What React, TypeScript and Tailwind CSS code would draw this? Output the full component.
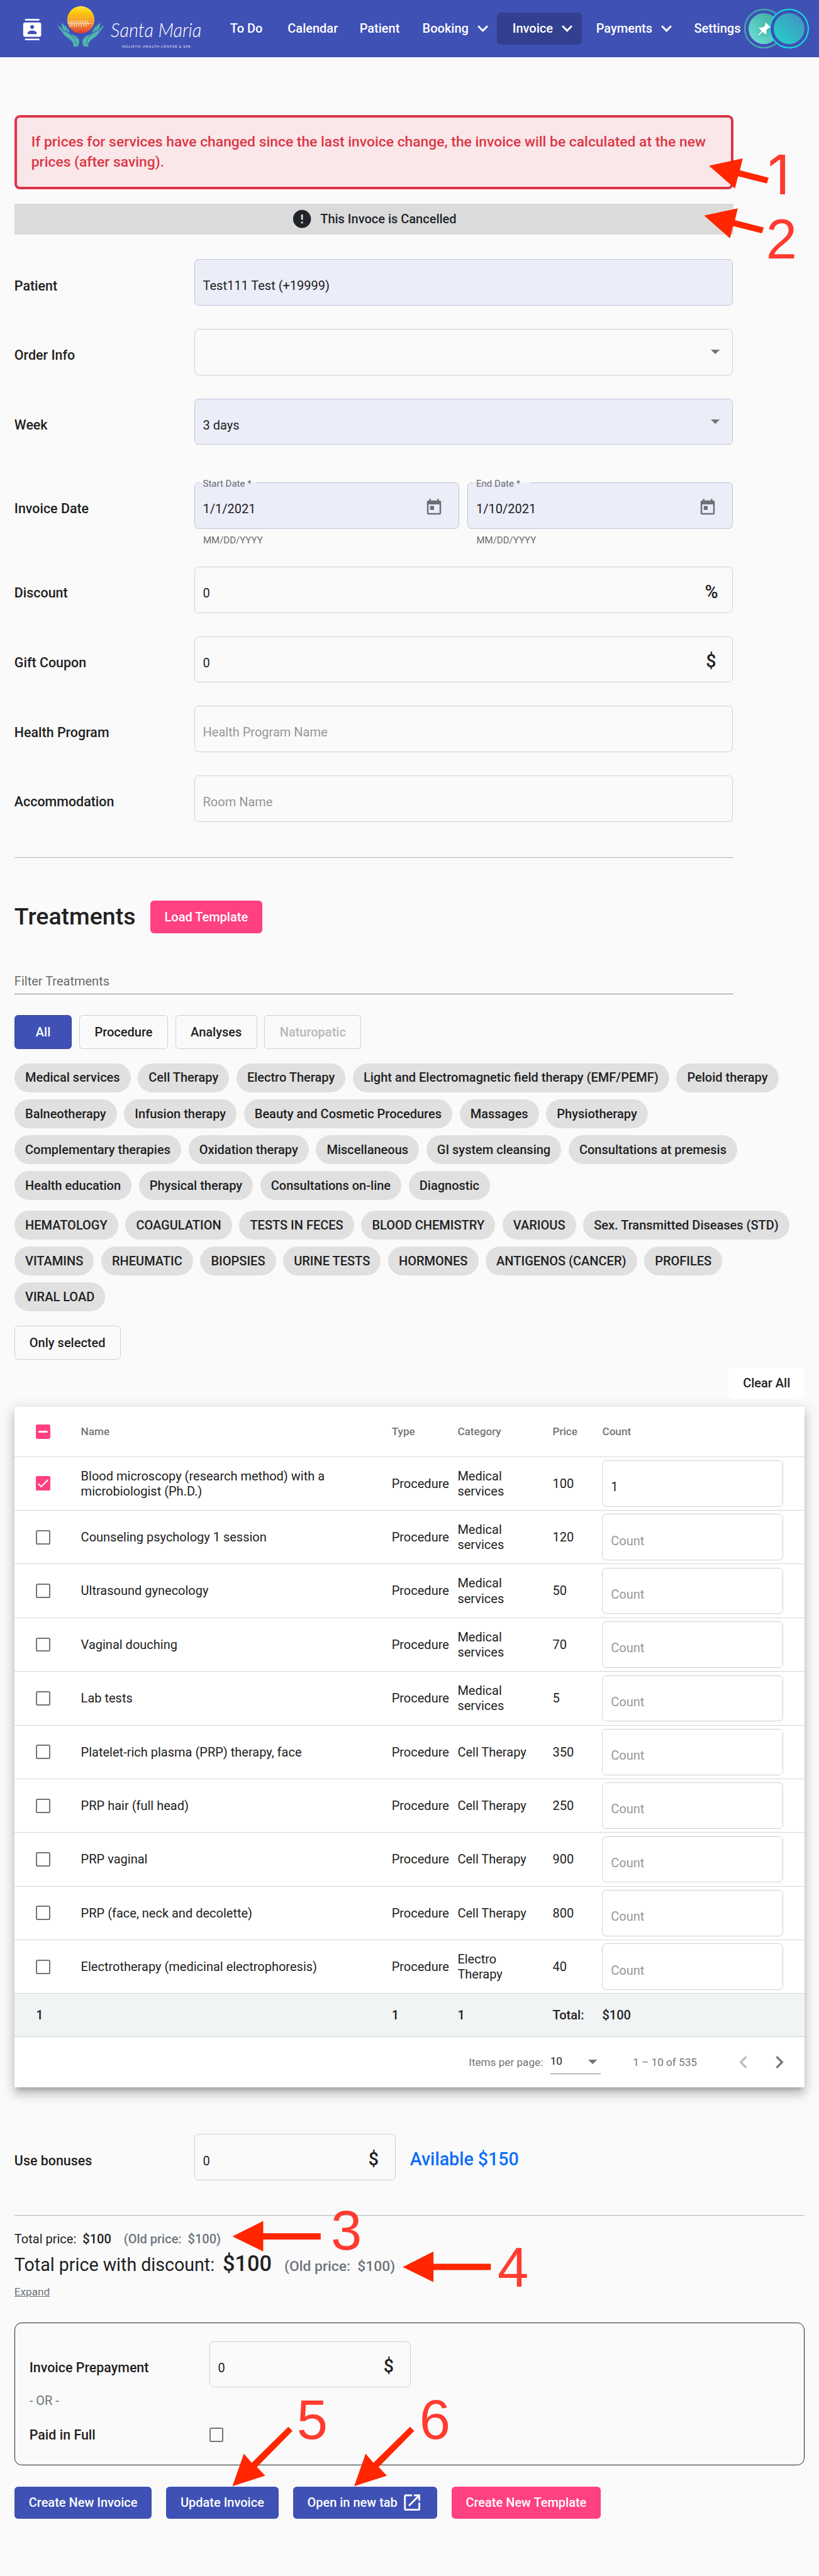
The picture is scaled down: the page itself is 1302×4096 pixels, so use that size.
import { useLayoutEffect, type ReactNode } from "react";

const navItems = [
  { label: "To Do", width: "w-16" },
  { label: "Calendar", width: "w-20" },
  { label: "Patient", width: "w-[4.37rem]" },
];

const treatments = [
  "Medical services",
  "Cell Therapy",
  "Electro Therapy",
  "Light and Electromagnetic field therapy (EMF/PEMF)",
  "Peloid therapy",
  "Balneotherapy",
  "Infusion therapy",
  "Beauty and Cosmetic Procedures",
  "Massages",
  "Physiotherapy",
  "Complementary therapies",
  "Oxidation therapy",
  "Miscellaneous",
  "GI system cleansing",
  "Consultations at premesis",
  "Health education",
  "Physical therapy",
  "Consultations on-line",
  "Diagnostic",
];

const analyses = [
  "HEMATOLOGY",
  "COAGULATION",
  "TESTS IN FECES",
  "BLOOD CHEMISTRY",
  "VARIOUS",
  "Sex. Transmitted Diseases (STD)",
  "VITAMINS",
  "RHEUMATIC",
  "BIOPSIES",
  "URINE TESTS",
  "HORMONES",
  "ANTIGENOS (CANCER)",
  "PROFILES",
  "VIRAL LOAD",
];

const rows = [
  { name: "Blood microscopy (research method) with a microbiologist (Ph.D.)", category: "Medical services", price: 100, count: "1" },
  { name: "Counseling psychology 1 session", category: "Medical services", price: 120 },
  { name: "Ultrasound gynecology", category: "Medical services", price: 50 },
  { name: "Vaginal douching", category: "Medical services", price: 70 },
  { name: "Lab tests", category: "Medical services", price: 5 },
  { name: "Platelet-rich plasma (PRP) therapy, face", category: "Cell Therapy", price: 350 },
  { name: "PRP hair (full head)", category: "Cell Therapy", price: 250 },
  { name: "PRP vaginal", category: "Cell Therapy", price: 900 },
  { name: "PRP (face, neck and decolette)", category: "Cell Therapy", price: 800 },
  { name: "Electrotherapy (medicinal electrophoresis)", category: "Electro Therapy", price: 40 },
];

const gridCols = "grid grid-cols-[4.625rem_21.606rem_4.58rem_6.606rem_3.456rem_1fr] items-center";

function Chevron() {
  return (
    <svg className="ml-2.5 h-2 w-3 shrink-0" viewBox="0 0 12 8" fill="none" stroke="currentColor" strokeWidth="2">
      <path d="M0.8 0.9 L6 6.2 L11.2 0.9" />
    </svg>
  );
}

function Logo() {
  return (
    <svg className="-mt-1 h-15 w-17.5 shrink-0" viewBox="0 0 420 360">
      <defs>
        <linearGradient id="sun" x1="0" y1="0" x2="0" y2="1">
          <stop offset="0" stopColor="#ffe63a" />
          <stop offset="0.25" stopColor="#fcc60c" />
          <stop offset="0.55" stopColor="#f5a032" />
          <stop offset="0.8" stopColor="#ea6a30" />
          <stop offset="1" stopColor="#e2392c" />
        </linearGradient>
      </defs>
      <circle cx="208" cy="132" r="91" fill="url(#sun)" />
      <path
        d="M121 157 H294 M122 154 l3 -16 5 34 5 8 4 -24 4 -18 5 40 4 -22 5 -18 6 42 6 -24 4 -20 5 44 6 -26 5 -18 5 42 6 -24 5 -18 5 44 6 -26 5 -18 5 42 6 -24 5 -18 5 44 6 -26 5 -18 5 30 4 -14"
        fill="none"
        stroke="#fde3cc"
        strokeWidth="3"
      />
      <g id="hand" fill="#4db6ac">
        <path d="M55 170 C68 176 78 188 86 200 C104 204 128 218 146 232 C170 240 190 248 195 266 C200 284 194 300 188 310 L158 312 C162 296 154 280 140 268 C116 250 90 232 80 208 C68 196 60 184 55 170 Z" />
        <path d="M78 153 C92 160 100 174 106 190 L112 208 L90 198 C84 184 80 168 78 153 Z" />
        <path d="M101 165 C112 176 118 192 122 214 L112 208 C108 194 103 180 101 165 Z" />
        <path d="M117 184 C126 194 130 208 135 224 L124 216 Z" />
        <path d="M146 232 C166 234 182 244 188 258 C170 256 156 246 146 232 Z" />
      </g>
      <path d="M84 202 C112 212 138 228 154 246 C172 262 168 284 176 302 M104 206 C126 216 142 226 156 242 C168 252 182 254 190 260" fill="none" stroke="#3f51b5" strokeWidth="2.5" />
      <g transform="translate(416 0) scale(-1 1)">
        <use href="#hand" />
        <path d="M84 202 C112 212 138 228 154 246 C172 262 168 284 160 302 M104 206 C126 216 142 226 156 242 C168 252 182 254 190 260" fill="none" stroke="#3f51b5" strokeWidth="2.5" />
      </g>
    </svg>
  );
}

function Wordmark() {
  return (
    <svg className="h-12 w-27 shrink-0" viewBox="0 0 108 48" fill="#ffffff">
      <text x="0" y="25.5" fontFamily="Lato" fontStyle="italic" fontWeight="300" fontSize="22" textLength="101" lengthAdjust="spacingAndGlyphs">
        Santa Maria
      </text>
      <text x="12.4" y="37.2" fontFamily="Lato" fontSize="4.1" textLength="76.5" fillOpacity="0.85">
        HOLISTIC HEALTH CENTER &amp; SPA
      </text>
    </svg>
  );
}

function Header() {
  return (
    <header className="flex h-16 items-center bg-[#3f51b5] text-sm font-medium text-white">
      <svg className="mt-0.5 ml-6 size-6 shrink-0" viewBox="0 0 24 24" fill="currentColor">
        <path d="M20 0H4v2h16V0zM4 24h16v-2H4v2zM20 4H4c-1.1 0-2 .9-2 2v12c0 1.1.9 2 2 2h16c1.1 0 2-.9 2-2V6c0-1.1-.9-2-2-2zm-8 2.75c1.24 0 2.25 1.01 2.25 2.25s-1.01 2.25-2.25 2.25S9.75 10.24 9.75 9 10.76 6.75 12 6.75zM17 17H7v-1.5c0-1.67 3.33-2.5 5-2.5s5 .83 5 2.5V17z" />
      </svg>
      <div className="flex w-52 items-center pl-1.75">
        <Logo />
        <div className="-ml-0.5 pt-4">
          <Wordmark />
        </div>
      </div>
      <nav className="flex h-9 items-center whitespace-nowrap">
        {navItems.map((item) => (
          <a key={item.label} className={item.width}>
            {item.label}
          </a>
        ))}
        <a className="flex w-[5.2rem] items-center">
          Booking
          <Chevron />
        </a>
        <a className="flex h-9 w-23.5 items-center rounded bg-[#33408f] pl-4.25">
          Invoice
          <Chevron />
        </a>
        <a className="flex w-31.25 items-center pl-4">
          Payments
          <Chevron />
        </a>
        <a>Settings</a>
      </nav>
      <div className="ml-1 flex items-center">
        <span className="flex size-11 shrink-0 items-center justify-center rounded-full border-[0.125rem] border-[#45b5ab]">
          <span className="flex size-8.5 items-center justify-center rounded-full bg-linear-to-bl from-[#38a89d] to-[#6fe3d8]">
            <svg className="size-3.5 drop-shadow-md" viewBox="0 0 80 80" fill="#ffffff">
              <path d="M50 0 L80 28 C74 36 68 33 65 35 L53 48 C53 58 56 68 49 76 L31 59 L3 82 L0 79 L23 52 L6 36 C12 29 24 31 33 30 L45 18 C48 12 44 7 50 0 Z" />
            </svg>
          </span>
        </span>
        <span className="-ml-4 flex size-11 shrink-0 items-center justify-center rounded-full border-[0.125rem] border-[#15e4dc] bg-[#3f51b5]">
          <span className="size-8.5 rounded-full bg-linear-to-bl from-[#3f8fc0] to-[#1cd3ca]" />
        </span>
      </div>
    </header>
  );
}

function Row({ label, className, children }: { label: string; className: string; children: ReactNode }) {
  return (
    <div className={`flex items-start ${className}`}>
      <div className="flex h-[3.22rem] w-50 shrink-0 items-center pt-2 text-[0.9375rem] font-medium">{label}</div>
      {children}
    </div>
  );
}

function Field({
  value,
  placeholder,
  filled,
  label,
  className = "w-[37.46rem]",
  children,
}: {
  value?: string;
  placeholder?: string;
  filled?: boolean;
  label?: string;
  className?: string;
  children?: ReactNode;
}) {
  return (
    <div
      className={`relative flex h-[3.22rem] items-center justify-between rounded-[0.3rem] border pl-2.25 text-sm ${
        filled ? "border-[#c0c3d6] bg-[#ebedf9]" : "border-[#d0d0d0]"
      } ${className}`}
    >
      {label && (
        <>
          <span className="absolute -top-px left-1.25 h-px w-16 bg-[#ebedf9]" />
          <span className="absolute -top-1 left-2.25 text-[0.65625rem] leading-2.5 text-[#6b6c74]">{label}</span>
        </>
      )}
      <span className={value ? "pt-2" : "pt-2 text-[#979797]"}>{value ?? placeholder}</span>
      {children}
    </div>
  );
}

function DropArrow({ className }: { className: string }) {
  return (
    <svg className={`h-1.25 w-2.5 ${className}`} viewBox="0 0 10 5" fill="#757575">
      <path d="M0 0 H10 L5 5 Z" />
    </svg>
  );
}

function TodayIcon() {
  return (
    <svg className="mt-1 mr-4.25 size-5.25" viewBox="0 0 24 24" fill="#6e6f75">
      <path d="M19 3h-1V1h-2v2H8V1H6v2H5c-1.11 0-1.99.9-1.99 2L3 19c0 1.1.89 2 2 2h14c1.1 0 2-.9 2-2V5c0-1.1-.9-2-2-2zm0 16H5V8h14v11zM7 10h5v5H7z" />
    </svg>
  );
}

function Suffix({ children, className = "mr-4.5" }: { children: ReactNode; className?: string }) {
  return <span className={`pt-1 text-xl font-medium ${className}`}>{children}</span>;
}

function Checkbox({ state = "empty" }: { state?: "empty" | "checked" | "mixed" }) {
  if (state === "empty") {
    return <span className="block size-4 rounded-[0.125rem] border-[0.125rem] border-[#757575]" />;
  }
  return (
    <span className="flex size-4 items-center justify-center rounded-[0.125rem] bg-[#ff4081]">
      {state === "mixed" ? (
        <span className="h-0.5 w-2.5 rounded-full bg-white" />
      ) : (
        <svg className="size-4" viewBox="0 0 24 24" fill="none" stroke="#ffffff" strokeWidth="2.1">
          <path d="M4.1 12.7 L9 17.6 L20.3 6.3" />
        </svg>
      )}
    </span>
  );
}

function Chips({ items }: { items: string[] }) {
  return (
    <div className="-mr-2 flex flex-wrap gap-2">
      {items.map((item) => (
        <span key={item} className="flex h-8 items-center rounded-full bg-[#e0e0e0] px-3 text-sm font-medium whitespace-nowrap">
          {item}
        </span>
      ))}
    </div>
  );
}

function Button({ children, accent }: { children: ReactNode; accent?: boolean }) {
  return (
    <button
      className={`flex h-9 items-center rounded px-4 text-sm font-medium whitespace-nowrap text-white ${
        accent ? "bg-[#ff4081]" : "bg-[#3f51b5]"
      }`}
    >
      {children}
    </button>
  );
}

function TreatmentsTable() {
  return (
    <div className="mt-2 bg-white text-sm shadow-[0_0.3125rem_0.3125rem_-0.1875rem_rgba(0,0,0,0.2),0_0.5rem_0.625rem_0.0625rem_rgba(0,0,0,0.14),0_0.1875rem_0.875rem_0.125rem_rgba(0,0,0,0.12)]">
      <div className={`${gridCols} h-14 border-b border-[#d6d6d6] text-xs font-medium text-[#757575]`}>
        <div className="pl-6">
          <Checkbox state="mixed" />
        </div>
        <div>Name</div>
        <div>Type</div>
        <div>Category</div>
        <div>Price</div>
        <div>Count</div>
      </div>
      {rows.map((row) => (
        <div key={row.name} className={`${gridCols} h-[3.734rem] border-b border-[#d6d6d6] leading-[1.0625rem]`}>
          <div className="pl-6">
            <Checkbox state={row.count ? "checked" : "empty"} />
          </div>
          <div className="pr-4">{row.name}</div>
          <div>Procedure</div>
          <div className="pr-4">{row.category}</div>
          <div>{row.price}</div>
          <Field value={row.count} placeholder="Count" className="w-50.25" />
        </div>
      ))}
      <div className={`${gridCols} h-12 border-b border-[#cdd0d1] bg-[#f1f4f5] font-medium`}>
        <div className="pl-6">1</div>
        <div />
        <div>1</div>
        <div>1</div>
        <div>Total:</div>
        <div>$100</div>
      </div>
      <div className="flex h-14 items-center justify-end text-xs text-[#757575]">
        <span>Items per page:</span>
        <span className="mt-0.5 ml-2 flex h-6 w-14 items-center justify-between border-b border-[#868686] pr-1 pb-1 text-[#212121]">
          10
          <DropArrow className="mt-0.5" />
        </span>
        <span className="ml-9 w-27.25">1 – 10 of 535</span>
        <svg className="size-7" viewBox="0 0 24 24" fill="#bdbdbd">
          <path d="M15.41 7.41L14 6l-6 6 6 6 1.41-1.41L10.83 12z" />
        </svg>
        <svg className="mr-3.5 ml-3 size-7" viewBox="0 0 24 24" fill="#757575">
          <path d="M10 6L8.59 7.41 13.17 12l-4.58 4.59L10 18l6-6z" />
        </svg>
      </div>
    </div>
  );
}

const sideArrow = "M788.7 184.4 L826.2 176.2 L823 189.4 L855 197.6 L853 204.1 L821 196.1 L817.5 209.7 Z";
const downArrow = "M258.5 2766.2 L271.3 2729.9 L280 2740 L320.7 2700 L325.4 2704.5 L285.8 2744.7 L295 2754.4 Z";

/* Numbered call-outs that sit over the page content. */
function Annotations() {
  return (
    <svg className="pointer-events-none absolute inset-0 h-full w-full" viewBox="0 0 911 2866" preserveAspectRatio="none">
      <g fill="#ff2600">
        <path d={sideArrow} />
        <path d={sideArrow} transform="translate(-5.5 55.5)" />
        <path d="M258.5 2488.2 L292.8 2471 V2484.6 H356.7 V2491.6 H292.8 V2505 Z" />
        <path d="M448 2522.2 L482.2 2505 V2518.6 H546 V2525.6 H482.2 V2539 Z" />
        <path d={downArrow} />
        <path d={downArrow} transform="translate(135.4 0)" />
      </g>
      <g fill="#ff3b30" fontFamily="Liberation Sans" fontSize="62">
        <text x="854" y="216" fontFamily="Inter" fontSize="60.5">
          1
        </text>
        <text x="852" y="287.8">2</text>
        <text x="368" y="2503">3</text>
        <text x="553.5" y="2544">4</text>
        <text x="330" y="2713.5">5</text>
        <text x="466.5" y="2713.5">6</text>
      </g>
    </svg>
  );
}

export default function App() {
  // Every size below is in rem; the root size scales the 911px-wide layout up to the window.
  useLayoutEffect(() => {
    const root = document.documentElement;
    root.classList.add("text-[22.867px]", "bg-[#fafafa]");
    return () => root.classList.remove("text-[22.867px]", "bg-[#fafafa]");
  }, []);

  return (
    <div className="relative h-[4096px] w-[1302px] overflow-hidden bg-[#fafafa] font-[Roboto,sans-serif] text-base text-[#212121]">
      <Header />
      <main className="px-4 pt-16">
        <div className="h-[5.175rem] w-200 rounded-md border-[0.1875rem] border-[#dc3545] bg-[#fae7e9] p-4 text-base leading-[1.4rem] font-medium text-[#dc3545]">
          If prices for services have changed since the last invoice change, the invoice will be calculated at the new prices (after saving).
        </div>
        <div className="mt-4 flex h-8.5 w-200 items-center justify-center bg-[#dbdbdb] text-sm font-medium text-[#212529]">
          <svg className="mr-2 size-6" viewBox="0 0 24 24" fill="currentColor">
            <path d="M12 2C6.48 2 2 6.48 2 12s4.48 10 10 10 10-4.48 10-10S17.52 2 12 2zm1 15h-2v-2h2v2zm0-4h-2V7h2v6z" />
          </svg>
          This Invoce is Cancelled
        </div>

        <section className="mt-[1.73rem] w-200">
          <Row label="Patient" className="h-[4.84rem]">
            <Field filled value="Test111 Test (+19999)" />
          </Row>
          <Row label="Order Info" className="h-[4.84rem]">
            <Field>
              <DropArrow className="mr-3.5" />
            </Field>
          </Row>
          <Row label="Week" className="h-[5.83rem]">
            <Field filled value="3 days">
              <DropArrow className="mr-3.5" />
            </Field>
          </Row>
          <Row label="Invoice Date" className="h-[5.86rem]">
            <div className="flex gap-2.25">
              {[
                { label: "Start Date *", value: "1/1/2021" },
                { label: "End Date *", value: "1/10/2021" },
              ].map((date) => (
                <div key={date.label}>
                  <Field filled label={date.label} value={date.value} className="w-[18.44rem]">
                    <TodayIcon />
                  </Field>
                  <div className="mt-1.5 ml-2.5 text-[0.65625rem] leading-3.5 text-[#6b6b6b]">MM/DD/YYYY</div>
                </div>
              ))}
            </div>
          </Row>
          <Row label="Discount" className="h-[4.84rem]">
            <Field value="0">
              <Suffix className="mr-4">%</Suffix>
            </Field>
          </Row>
          <Row label="Gift Coupon" className="h-[4.84rem]">
            <Field value="0">
              <Suffix>$</Suffix>
            </Field>
          </Row>
          <Row label="Health Program" className="h-[4.84rem]">
            <Field placeholder="Health Program Name" />
          </Row>
          <Row label="Accommodation" className="h-[5.675rem]">
            <Field placeholder="Room Name" />
          </Row>
          <hr className="border-[#b3b3b3]" />

          <div className="mt-12 flex items-center gap-4">
            <h1 className="w-33.75 text-[1.64rem] leading-9 font-medium">Treatments</h1>
            <Button accent>Load Template</Button>
          </div>
          <div className="flex h-17 items-end border-b border-[#868686] pb-1 text-sm leading-5 text-[#6a6a6a]">Filter Treatments</div>
        </section>

        <section>
          <div className="mt-5.75 flex h-9.5 gap-2 text-sm font-medium">
            <button className="w-16 rounded border border-[#37469d] bg-[#3f51b5] text-white">All</button>
            <button className="w-24.75 rounded border border-[#d0d0d0]">Procedure</button>
            <button className="w-22.75 rounded border border-[#d0d0d0]">Analyses</button>
            <button className="w-27 rounded border border-[#d0d0d0] text-[#b8b8b8]">Naturopatic</button>
          </div>
          <div className="mt-4 flex flex-col gap-3">
            <Chips items={treatments} />
            <Chips items={analyses} />
          </div>
          <button className="mt-4 block h-9.5 w-29.5 rounded border border-[#d0d0d0] text-sm font-medium">Only selected</button>
          <div className="mt-2 flex justify-end">
            <button className="h-9 rounded bg-white px-4 text-sm font-medium">Clear All</button>
          </div>
          <TreatmentsTable />
        </section>

        <section className="mt-13">
          <Row label="Use bonuses" className="h-22.5">
            <Field value="0" className="w-56">
              <Suffix>$</Suffix>
            </Field>
            <span className="ml-4 flex h-[3.22rem] items-center pt-1 text-xl font-medium text-[#0d6efd]">Avilable $150</span>
          </Row>
          <hr className="border-[#b3b3b3]" />
          <div className="mt-4 flex h-5 items-baseline text-sm">
            Total price:
            <span className="ml-1.75 font-medium">$100</span>
            <span className="ml-3.5 font-medium text-[#6c757d]">(Old price:&nbsp; $100)</span>
          </div>
          <div className="flex h-9 items-baseline text-xl leading-9">
            Total price with discount:
            <span className="ml-2.25 text-2xl leading-9 font-medium">$100</span>
            <span className="ml-3.5 text-base font-medium text-[#6c757d]">(Old price:&nbsp; $100)</span>
          </div>
          <a className="mt-0.75 block text-xs leading-5 text-[#6c757d] underline">Expand</a>
          <div className="mt-6 h-[9.91rem] rounded-lg border border-[#212529] px-4 pt-5">
            <Row label="Invoice Prepayment" className="">
              <Field value="0" className="w-56">
                <Suffix>$</Suffix>
              </Field>
            </Row>
            <div className="mt-1.25 text-sm leading-5 text-[#6c757d]">- OR -</div>
            <div className="mt-4.5 flex h-5 items-center text-[0.9375rem] font-medium">
              <span className="w-50">Paid in Full</span>
              <Checkbox />
            </div>
          </div>
          <div className="mt-6 flex gap-4">
            <Button>Create New Invoice</Button>
            <Button>Update Invoice</Button>
            <Button>
              Open in new tab
              <svg className="ml-1 size-6" viewBox="0 0 24 24" fill="currentColor">
                <path d="M19 19H5V5h7V3H5c-1.11 0-2 .9-2 2v14c0 1.1.89 2 2 2h14c1.1 0 2-.9 2-2v-7h-2v7zM14 3v2h3.59l-9.83 9.83 1.41 1.41L19 6.41V10h2V3h-7z" />
              </svg>
            </Button>
            <Button accent>Create New Template</Button>
          </div>
        </section>
      </main>
      <Annotations />
    </div>
  );
}
